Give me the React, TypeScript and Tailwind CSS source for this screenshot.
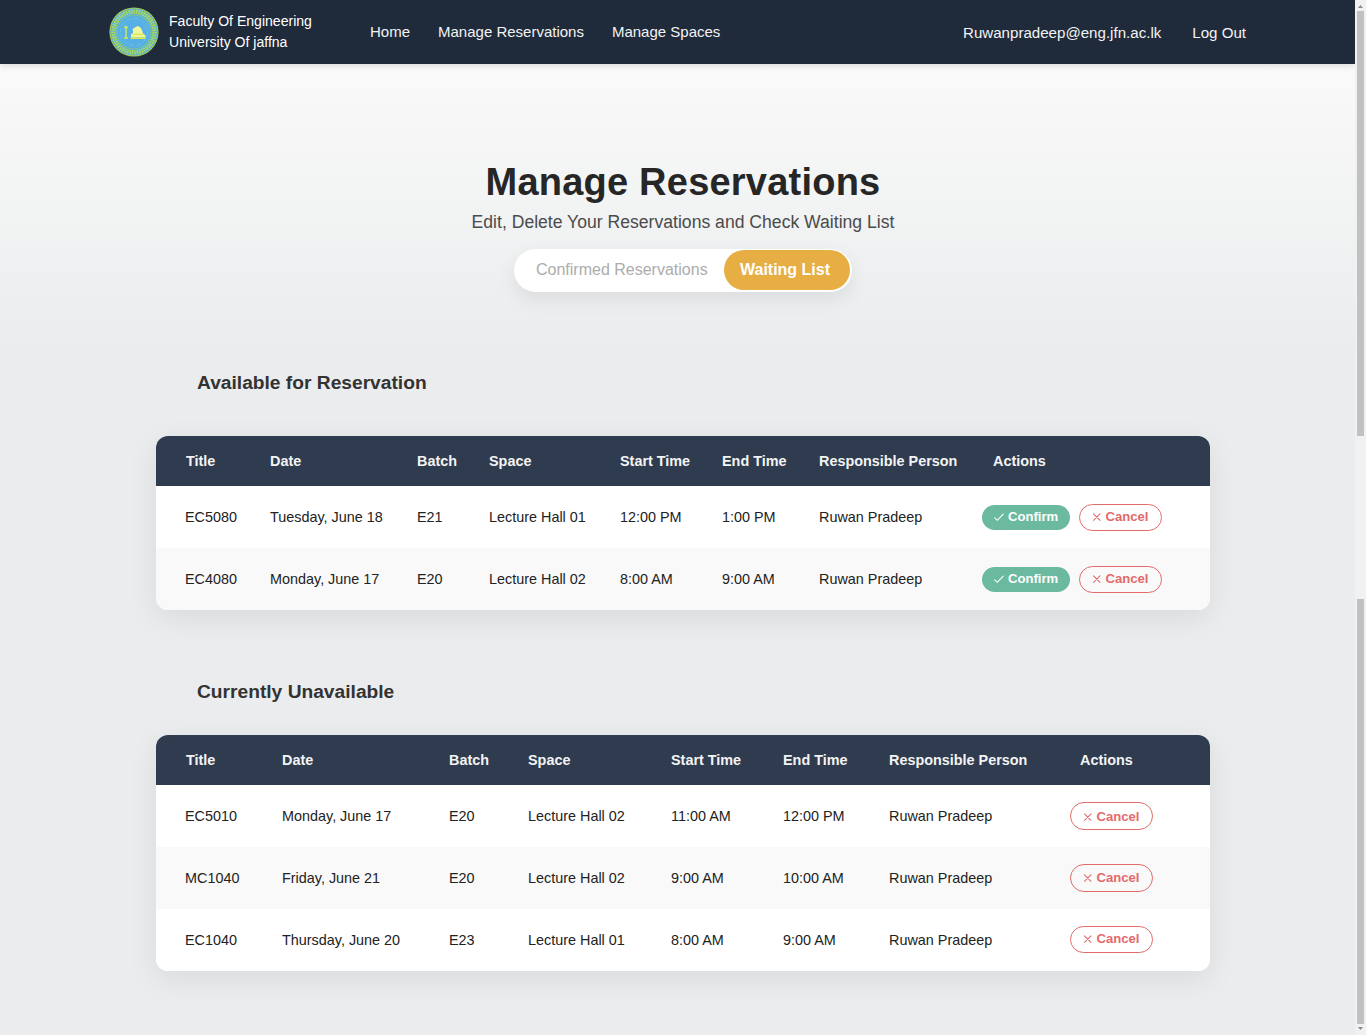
import React from "react";

const stroke = { fill: "none", stroke: "currentColor", strokeWidth: 1.05, strokeLinecap: "round" as const };

function Check() {
  return (
    <svg viewBox="0 0 12 12" className="mr-[3px] h-3 w-3">
      <path d="M1.7 6.9 L4.3 9.3 L10.2 3.1" {...stroke} />
    </svg>
  );
}

function Cross() {
  return (
    <svg viewBox="0 0 12 12" className="mr-[3px] h-3 w-3">
      <path d="M2.5 2.8 L9 9.3 M9 2.8 L2.5 9.3" {...stroke} />
    </svg>
  );
}

function Logo() {
  return (
    <svg viewBox="0 0 50 50" className="h-[50px] w-[50px] shrink-0">
      <circle cx="25" cy="25" r="24.6" fill="#a5c94f" />
      <circle cx="25" cy="25" r="23.6" fill="#58b0d4" />
      <circle cx="25" cy="25" r="20.4" fill="none" stroke="#b4dc58" strokeWidth="4.4" strokeDasharray="1.5 1" />
      <circle cx="25" cy="25" r="20.4" fill="none" stroke="#8cc77c" strokeWidth="1" />
      <circle cx="25" cy="25" r="17" fill="#56b0e6" stroke="#8cc97c" strokeWidth=".8" />
      <circle cx="25" cy="25" r="13.6" fill="none" stroke="#74c4cc" strokeWidth=".8" strokeDasharray="5 2" />
      <path d="M17 18.5 v12 M15 20.5 h4 M15 31 h4" fill="none" stroke="#cfe65c" strokeWidth="1.4" />
      <path d="M22 30.5 V27.5 L24 26 V23.5 L23.5 22 L26 20.5 L28.5 19 L31 20 L33 23 L34 26.5 L36.5 28.5 V30.5 Z" fill="#eef59a" />
      <path d="M21.5 31.2 h15 M24 27.4 h10" stroke="#d6ea4e" strokeWidth="1.4" />
    </svg>
  );
}

type Row = { cells: string[]; confirm?: boolean; cancelClass: string };

const headers = ["Title", "Date", "Batch", "Space", "Start Time", "End Time", "Responsible Person"];

function ReservationTable({ rows, cols, actionPad }: { rows: Row[]; cols: string; actionPad: string }) {
  return (
    <div className="ml-[156px] w-[1054px] overflow-hidden rounded-xl bg-white text-[14.4px] shadow-[0_8px_30px_rgba(0,0,0,0.08)]">
      <div className={`grid h-[50px] items-center bg-[#2f3b4f] pt-[2px] pl-[30px] font-bold text-[#f3f3f3] ${cols}`}>
        {headers.map((h) => (
          <div key={h}>{h}</div>
        ))}
        <div className={actionPad}>Actions</div>
      </div>
      {rows.map((row, i) => (
        <div key={i} className={`grid h-[62px] items-center pl-[30px] text-[#222] ${cols} ${i % 2 ? "bg-[#f9f9f9]" : "bg-white"}`}>
          {row.cells.map((c, j) => (
            <div key={j} className={j === 0 ? "-ml-px pt-[2px]" : "pt-[2px]"}>{c}</div>
          ))}
          <div className="flex items-center gap-[9px] text-[13.1px] font-bold">
            {row.confirm && (
              <button className="flex h-[25px] w-[88px] items-center rounded-full bg-[#6bbaa0] pl-[11px] text-white">
                <Check />
                Confirm
              </button>
            )}
            <button className={`flex w-[83px] items-center rounded-full border border-[#e26a6a] pl-[10.5px] text-[#e26a6a] ${row.cancelClass}`}>
              <Cross />
              Cancel
            </button>
          </div>
        </div>
      ))}
    </div>
  );
}

const available: Row[] = [
  { cells: ["EC5080", "Tuesday, June 18", "E21", "Lecture Hall 01", "12:00 PM", "1:00 PM", "Ruwan Pradeep"], confirm: true, cancelClass: "h-[27px]" },
  { cells: ["EC4080", "Monday, June 17", "E20", "Lecture Hall 02", "8:00 AM", "9:00 AM", "Ruwan Pradeep"], confirm: true, cancelClass: "h-[27px]" },
];

const unavailable: Row[] = [
  { cells: ["EC5010", "Monday, June 17", "E20", "Lecture Hall 02", "11:00 AM", "12:00 PM", "Ruwan Pradeep"], cancelClass: "h-7 pt-px" },
  { cells: ["MC1040", "Friday, June 21", "E20", "Lecture Hall 02", "9:00 AM", "10:00 AM", "Ruwan Pradeep"], cancelClass: "h-7 pb-px" },
  { cells: ["EC1040", "Thursday, June 20", "E23", "Lecture Hall 01", "8:00 AM", "9:00 AM", "Ruwan Pradeep"], cancelClass: "mb-px h-[27px] pb-px" },
];

function Scrollbar() {
  return (
    <div className="flex h-full w-[11px] shrink-0 flex-col items-center bg-[#f1f1f1]">
      <div className="flex h-[11px] items-center pt-[2px]">
        <svg viewBox="0 0 5 3" className="h-[3px] w-[5px]"><path d="M0 3 L2.5 0 L5 3 Z" fill="#8b8b8b" /></svg>
      </div>
      <div className="h-[425px] w-[7px] bg-[#c1c1c1]" />
      <div className="h-[163px]" />
      <div className="h-[425px] w-[7px] bg-[#c1c1c1]" />
      <div className="flex h-[11px] items-center pb-[2px]">
        <svg viewBox="0 0 5 3" className="h-[3px] w-[5px]"><path d="M0 0 L2.5 3 L5 0 Z" fill="#8b8b8b" /></svg>
      </div>
    </div>
  );
}

export default function App() {
  return (
    <div className="flex h-[1035px] w-[1366px] overflow-hidden bg-[#ebecee] font-['Liberation_Sans',Arial,sans-serif]">
      <div className="flex min-w-0 flex-1 flex-col overflow-hidden">
        <header className="z-10 flex h-16 shrink-0 items-center bg-[#1f2a3b] pl-[109px] text-[15px] text-[#f3f3f3] shadow-[0_2px_6px_rgba(0,0,0,0.12)]">
          <Logo />
          <div className="ml-[10px] w-[201px] text-[14.05px] leading-[21px] text-white">
            Faculty Of Engineering
            <br />
            University Of jaffna
          </div>
          <nav className="flex gap-7">
            <a>Home</a>
            <a>Manage Reservations</a>
            <a>Manage Spaces</a>
          </nav>
          <div className="mr-[109px] ml-auto flex gap-[31px] pt-[2px] text-[15.1px]">
            <a>Ruwanpradeep@eng.jfn.ac.lk</a>
            <a>Log Out</a>
          </div>
        </header>
        <main className="flex-1 bg-[linear-gradient(to_bottom,#fbfafa_0px,#f3f4f4_120px,#ebecee_290px)]">
          <div className="flex flex-col items-center pl-[11px] pt-[94px]">
            <h1 className="h-12 text-[38px] leading-[48px] font-bold tracking-[0.22px] text-[#262626]">Manage Reservations</h1>
            <p className="mt-1 h-6 text-[17.6px] leading-6 text-[#4b4b4b]">Edit, Delete Your Reservations and Check Waiting List</p>
            <div className="mt-[15px] flex h-[43px] w-[338px] items-center rounded-full bg-white pl-[22px] text-base shadow-[0_8px_20px_rgba(0,0,0,0.08)]">
              <span className="w-[188px] pb-[2px] text-[#acacac]">Confirmed Reservations</span>
              <span className="mb-px flex h-10 w-[126px] items-center justify-center rounded-full bg-[#e7ae44] pr-[4px] font-bold text-white">Waiting List</span>
            </div>
          </div>
          <h2 className="mt-[76px] ml-[197px] h-7 pt-px text-[19.2px] leading-7 font-bold text-[#333]">Available for Reservation</h2>
          <div className="h-10" />
          <ReservationTable rows={available} cols="grid-cols-[84px_147px_72px_131px_102px_97px_163px_1fr]" actionPad="pl-[11px]" />
          <h2 className="mt-[67px] ml-[197px] h-7 pt-px text-[19.2px] leading-7 font-bold text-[#333]">Currently Unavailable</h2>
          <div className="h-[30px]" />
          <ReservationTable rows={unavailable} cols="grid-cols-[96px_167px_79px_143px_112px_106px_181px_1fr]" actionPad="pl-[10px]" />
        </main>
      </div>
      <Scrollbar />
    </div>
  );
}
